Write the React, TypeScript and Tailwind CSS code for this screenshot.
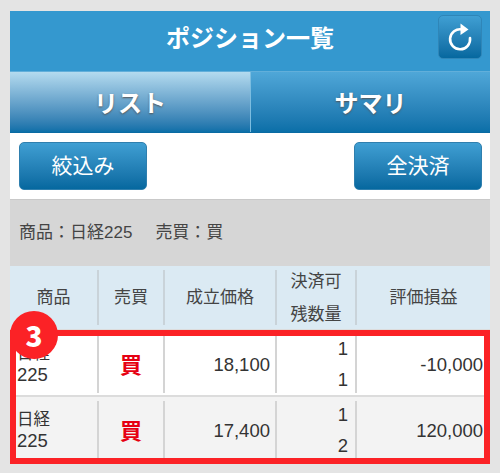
import React from "react";

const font = { fontFamily: '"Liberation Sans", "Noto Sans CJK JP", sans-serif' };

const rows = [
  { price: "18,100", a: "1", b: "1", pl: "-10,000", bg: "bg-white" },
  { price: "17,400", a: "1", b: "2", pl: "120,000", bg: "bg-[#f3f3f3]" },
];

const btn =
  "h-[48px] w-[128px] flex items-center justify-center rounded-[5px] border border-[#2f7fae] bg-gradient-to-b from-[#3f9fd3] to-[#05689f] text-white text-[21px]";

const App = () => {
  return (
    <div className="w-[500px] h-[473px] overflow-hidden bg-[#e4e4e4] pt-[11px] px-[10px]" style={font}>
      <div className="relative w-[480px] bg-white">
        <div className="relative h-[60px] flex items-center justify-center bg-[#3498cf] pb-[5px]">
          <span className="text-white text-[24px] font-bold">ポジション一覧</span>
          <button className="absolute right-[8px] top-[4px] w-[44px] h-[44px] rounded-[5px] border border-[#2f86b8] bg-gradient-to-b from-[#3f9fd3] to-[#05689f] flex items-center justify-center">
            <svg width="26" height="28" viewBox="0 0 26 28" fill="none">
              <path d="M15 6.5 A10 10 0 1 0 23 15" stroke="white" strokeWidth="2.6" strokeLinecap="round" />
              <path d="M13.5 0.5 L21.5 6.5 L13.5 12 Z" fill="white" />
            </svg>
          </button>
        </div>
        <div className="flex h-[62px] border-t border-[#62afda] border-b border-b-[#0a6ba3]">
          <div className="w-[240px] flex items-center justify-center pt-[3px] bg-gradient-to-b from-[#b4dbef] to-[#0a6fa8] text-white text-[24px] font-bold [text-shadow:0_1px_2px_#555]">
            リスト
          </div>
          <div className="w-px bg-[#7cbde0]" />
          <div className="flex-1 flex items-center justify-center pt-[3px] bg-gradient-to-b from-[#4fa7d8] to-[#0a6fa8] text-white text-[24px] font-bold [text-shadow:0_1px_2px_#555]">
            サマリ
          </div>
        </div>
        <div className="h-[66px] bg-white flex items-start justify-between pl-[9px] pr-[8px] pt-[9px]">
          <button className={btn}>絞込み</button>
          <button className={btn}>全決済</button>
        </div>
        <div className="h-[67px] bg-[#d6d6d6] border-t border-[#c9c9c9] flex items-center pl-[9px] text-[17px] text-[#444] whitespace-pre">
          <span>商品：日経225</span>
          <span className="ml-[23px]">売買：買</span>
        </div>
        <div className="flex h-[63px] bg-[#dbeaf3] text-[17px] text-[#444] py-[4px]">
          <div className="w-[89px] flex items-center justify-center border-r-2 border-[#c9d3d9] pt-[1px]">商品</div>
          <div className="w-[66px] flex items-center justify-center border-r-2 border-[#c9d3d9] pt-[1px]">売買</div>
          <div className="w-[112px] flex items-center justify-center border-r-2 border-[#c9d3d9] pt-[1px]">成立価格</div>
          <div className="w-[80px] flex flex-col items-center justify-center border-r-2 border-[#c9d3d9] leading-[33px]">
            <span>決済可</span>
            <span>残数量</span>
          </div>
          <div className="flex-1 flex items-center justify-center pt-[1px]">評価損益</div>
        </div>
        {rows.map((r) => (
          <div key={r.price} className={`flex h-[66px] ${r.bg} border-t-2 border-[#dcdcdc] text-[18.5px] text-[#333] pt-[4px] pb-[2px]`}>
            <div className="w-[89px] flex flex-col justify-center border-r-2 border-[#d4d4d4] pl-[7px] leading-[22px]">
              <span className="text-[16.5px]">日経</span>
              <span>225</span>
            </div>
            <div className="w-[66px] flex items-center justify-center border-r-2 border-[#d4d4d4] text-[#e60012] text-[22px] font-bold pt-[2px]">買</div>
            <div className="w-[112px] flex items-center justify-end border-r-2 border-[#d4d4d4] pr-[5px] pt-[2px]">{r.price}</div>
            <div className="w-[80px] flex flex-col items-end justify-between border-r-2 border-[#d4d4d4] pr-[7px] pt-[1px] leading-[26px]">
              <span>{r.a}</span>
              <span>{r.b}</span>
            </div>
            <div className="flex-1 flex items-center justify-end pr-[7px] pt-[2px]">{r.pl}</div>
          </div>
        ))}
        <div className="absolute left-0 top-[319px] w-[480px] h-[134px] border-[6px] border-[#fb2226]" />
        <div className="absolute left-[0px] top-[300px] w-[48px] h-[48px] rounded-full bg-[#fb2226] flex items-center justify-center text-white text-[28px] font-black" style={{ fontFamily: '"Noto Sans CJK JP", sans-serif' }}>
          3
        </div>
      </div>
    </div>
  );
};

export default App;
